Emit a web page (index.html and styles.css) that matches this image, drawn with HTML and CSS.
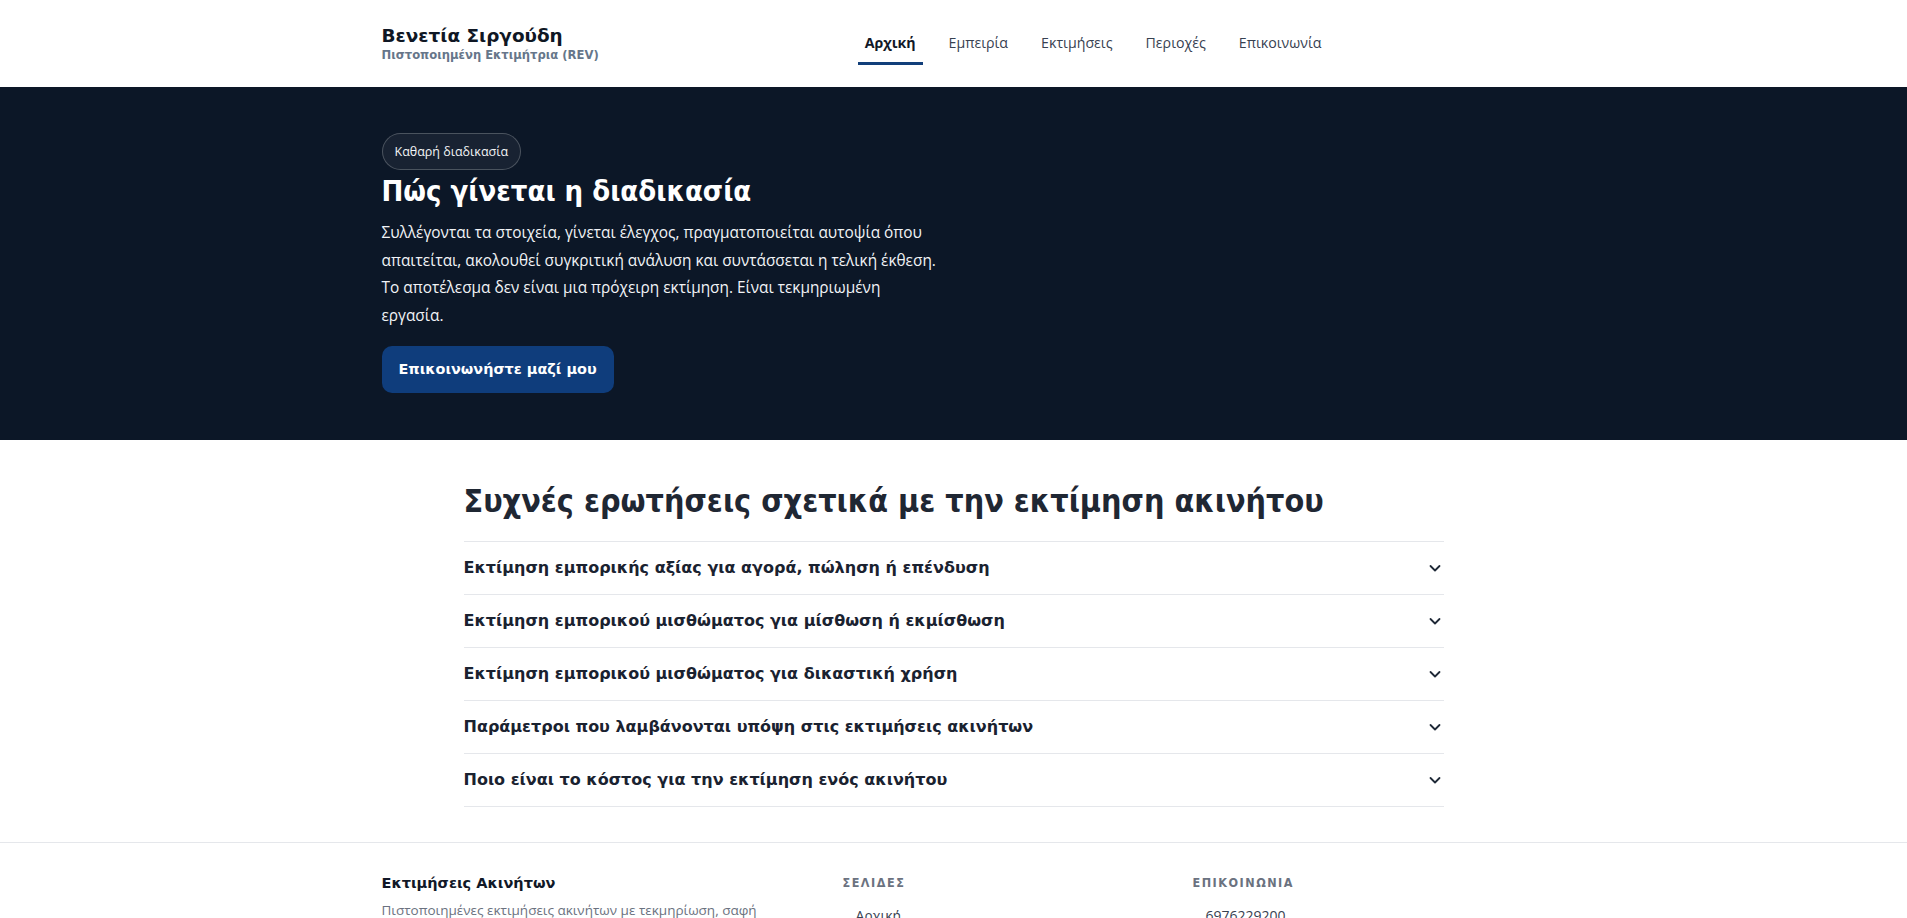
FILE: index.html
```html
<!DOCTYPE html>
<html lang="el">

<head>
    <meta charset="UTF-8">
    <meta name="viewport" content="width=device-width, initial-scale=1.0">
    <title>Πώς γίνεται η διαδικασία - Βενετία Σιργούδη</title>
    <link rel="stylesheet" href="styles.css">
</head>

<body>
    <!-- Header -->
    <header class="site-header">
        <div class="container header-inner">
            <a href="#" class="brand">
                <span class="brand-name">Βενετία Σιργούδη</span>
                <span class="brand-sub">Πιστοποιημένη Εκτιμήτρια (REV)</span>
            </a>
            <nav class="nav">
                <a href="#" class="nav-link active">Αρχική</a>
                <a href="#" class="nav-link">Εμπειρία</a>
                <a href="#" class="nav-link">Εκτιμήσεις</a>
                <a href="#" class="nav-link">Περιοχές</a>
                <a href="#" class="nav-link">Επικοινωνία</a>
            </nav>
        </div>
    </header>

    <!-- Hero -->
    <section class="hero">
        <div class="container">
            <span class="pill">Καθαρή διαδικασία</span>
            <h1 class="hero-title">Πώς γίνεται η διαδικασία</h1>
            <p class="hero-text">Συλλέγονται τα στοιχεία, γίνεται έλεγχος, πραγματοποιείται αυτοψία όπου απαιτείται, ακολουθεί συγκριτική ανάλυση και συντάσσεται η τελική έκθεση. Το αποτέλεσμα δεν είναι μια πρόχειρη εκτίμηση. Είναι τεκμηριωμένη εργασία.</p>
            <a href="#" class="btn">Επικοινωνήστε μαζί μου</a>
        </div>
    </section>

    <!-- FAQ -->
    <section class="faq">
        <h2 class="faq-title">Συχνές ερωτήσεις σχετικά με την εκτίμηση ακινήτου</h2>
        <div class="faq-list">
            <details class="faq-item">
                <summary>Εκτίμηση εμπορικής αξίας για αγορά, πώληση ή επένδυση
                    <svg class="chevron" viewBox="0 0 16 16"><path d="M3.5 6l4.5 4.5L12.5 6" /></svg>
                </summary>
            </details>
            <details class="faq-item">
                <summary>Εκτίμηση εμπορικού μισθώματος για μίσθωση ή εκμίσθωση
                    <svg class="chevron" viewBox="0 0 16 16"><path d="M3.5 6l4.5 4.5L12.5 6" /></svg>
                </summary>
            </details>
            <details class="faq-item">
                <summary>Εκτίμηση εμπορικού μισθώματος για δικαστική χρήση
                    <svg class="chevron" viewBox="0 0 16 16"><path d="M3.5 6l4.5 4.5L12.5 6" /></svg>
                </summary>
            </details>
            <details class="faq-item">
                <summary>Παράμετροι που λαμβάνονται υπόψη στις εκτιμήσεις ακινήτων
                    <svg class="chevron" viewBox="0 0 16 16"><path d="M3.5 6l4.5 4.5L12.5 6" /></svg>
                </summary>
            </details>
            <details class="faq-item">
                <summary>Ποιο είναι το κόστος για την εκτίμηση ενός ακινήτου
                    <svg class="chevron" viewBox="0 0 16 16"><path d="M3.5 6l4.5 4.5L12.5 6" /></svg>
                </summary>
            </details>
        </div>
    </section>

    <!-- Footer -->
    <footer class="site-footer">
        <div class="container footer-grid">
            <div class="footer-col">
                <h3 class="footer-brand">Εκτιμήσεις Ακινήτων</h3>
                <p class="footer-text">Πιστοποιημένες εκτιμήσεις ακινήτων με τεκμηρίωση, σαφή μεθοδολογία και έγκαιρη παράδοση.</p>
            </div>
            <div class="footer-col">
                <h4 class="footer-heading">Σελίδες</h4>
                <ul class="footer-links">
                    <li><a href="#">Αρχική</a></li>
                    <li><a href="#">Εμπειρία</a></li>
                    <li><a href="#">Εκτιμήσεις</a></li>
                </ul>
            </div>
            <div class="footer-col">
                <h4 class="footer-heading">Επικοινωνία</h4>
                <ul class="footer-links">
                    <li><a href="#">6976229200</a></li>
                    <li><a href="#">info@example.gr</a></li>
                </ul>
            </div>
        </div>
    </footer>
</body>

</html>
```

FILE: styles.css
```css
/* General */
* {
    box-sizing: border-box;
}

body {
    margin: 0;
    font-family: 'Open Sans', 'Noto Sans', sans-serif;
    color: #1f2937;
    background: #fff;
}

a {
    text-decoration: none;
    color: inherit;
}

.container {
    max-width: 1200px;
    margin: 0 auto;
    padding: 0 28px;
}

/* Header */
.site-header {
    background: #fff;
}

.header-inner {
    display: flex;
    align-items: center;
    height: 87px;
}

.brand {
    display: flex;
    flex-direction: column;
    font-family: 'DejaVu Sans', sans-serif;
    font-weight: bold;
}

.brand-name {
    font-size: 18.4px;
    line-height: 22px;
    color: #0f1724;
}

.brand-sub {
    font-size: 11.6px;
    line-height: 16px;
    color: #66768a;
}

.nav {
    display: flex;
    gap: 19px;
    margin-left: 259px;
}

.nav-link {
    font-size: 14.2px;
    line-height: 20px;
    padding: 11px 7px 9px;
    color: #374151;
    border-bottom: 3px solid transparent;
}

.nav-link.active {
    font-weight: bold;
    color: #111827;
    border-bottom-color: #123f7a;
}

/* Hero */
.hero {
    background: #0c1727;
    color: #fff;
    padding: 46px 0 47px;
}

.pill {
    display: inline-block;
    font-size: 12.5px;
    line-height: 17px;
    padding: 9px 12px;
    border: 1px solid rgba(255, 255, 255, 0.22);
    border-radius: 999px;
    background: rgba(255, 255, 255, 0.05);
    color: #f3f4f6;
}

.hero-title {
    font-family: 'DejaVu Sans Condensed', 'DejaVu Sans', sans-serif;
    font-stretch: condensed;
    font-size: 29px;
    line-height: 36px;
    margin: 3px 0 10px;
}

.hero-text {
    max-width: 560px;
    font-size: 15.4px;
    line-height: 27.5px;
    margin: 0 0 17px;
    color: #f1f3f6;
}

.btn {
    display: inline-block;
    font-family: 'DejaVu Sans', sans-serif;
    font-weight: bold;
    font-size: 14.4px;
    line-height: 19px;
    padding: 14px 17px;
    background: #0f3d7c;
    color: #fff;
    border-radius: 10px;
}

/* FAQ */
.faq {
    max-width: 980px;
    margin: 0 auto;
    padding: 41px 0 35px;
}

.faq-title {
    font-family: 'DejaVu Sans Condensed', 'DejaVu Sans', sans-serif;
    font-stretch: condensed;
    font-size: 32px;
    line-height: 40px;
    margin: 0 0 20px;
    color: #1f2733;
}

.faq-item {
    border-top: 1px solid #e5e7eb;
}

.faq-item:last-child {
    border-bottom: 1px solid #e5e7eb;
}

.faq-item summary {
    list-style: none;
    display: flex;
    justify-content: space-between;
    align-items: center;
    padding: 16px 0;
    font-family: 'DejaVu Sans', sans-serif;
    font-weight: bold;
    font-size: 16px;
    line-height: 20px;
    color: #1a2230;
    cursor: pointer;
}

.faq-item summary::-webkit-details-marker {
    display: none;
}

.chevron {
    width: 16px;
    height: 16px;
    margin-right: 1px;
    fill: none;
    stroke: #1f2937;
    stroke-width: 1.8;
    stroke-linecap: round;
    stroke-linejoin: round;
}

/* Footer */
.site-footer {
    border-top: 1px solid #e5e7eb;
    padding: 30px 0 40px;
}

.footer-grid {
    display: grid;
    grid-template-columns: 429px 318px 1fr;
    gap: 32px;
}

.footer-brand {
    font-family: 'DejaVu Sans', sans-serif;
    font-size: 14.5px;
    line-height: 20px;
    margin: 0 0 6px;
    color: #111827;
}

.footer-text {
    font-size: 13.5px;
    line-height: 22px;
    color: #6b7280;
    margin: 0;
    max-width: 400px;
}

.footer-heading {
    font-family: 'DejaVu Sans Condensed', 'DejaVu Sans', sans-serif;
    font-stretch: condensed;
    font-size: 12.5px;
    line-height: 20px;
    letter-spacing: 1.5px;
    text-transform: uppercase;
    color: #6b7280;
    margin: 0 0 11px;
}

.footer-links {
    list-style: none;
    margin: 0;
    padding: 0 0 0 13px;
}

.footer-links li {
    font-size: 14px;
    line-height: 24px;
    color: #374151;
}
```
